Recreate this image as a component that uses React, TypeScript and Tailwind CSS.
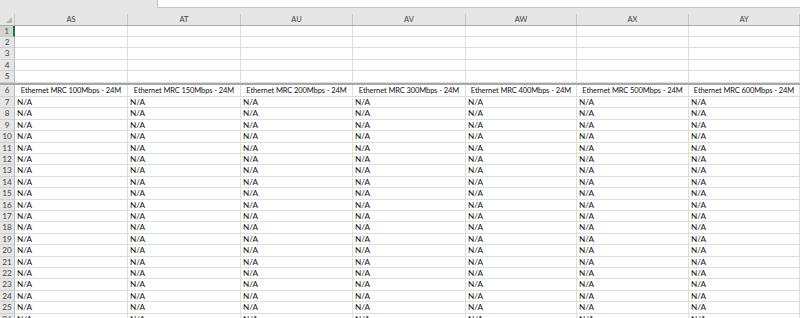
const columns = [
  { id: "AS", speed: "100Mbps" },
  { id: "AT", speed: "150Mbps" },
  { id: "AU", speed: "200Mbps" },
  { id: "AV", speed: "300Mbps" },
  { id: "AW", speed: "400Mbps" },
  { id: "AX", speed: "500Mbps" },
  { id: "AY", speed: "600Mbps" },
];

// grid template shared by every row so the column lines stay aligned
const cols = "grid grid-cols-[15px_113px_113px_112px_113px_111px_112px_1fr]";

// rows alternate 11/12px so they average out like the zoomed sheet
const rowHeight = (n: number) => ((n * 2) % 5 < 2 ? "h-[12px]" : "h-[11px]");

function RowHeader({ n, active }: { n: number; active?: boolean }) {
  return (
    <div
      className={
        active
          ? "flex items-center justify-center border-r-2 border-b border-r-[#217346] border-b-[#c8c8c8] bg-[#d3d3d3] text-[#217346]"
          : "flex items-center justify-center border-r border-b border-r-[#b9b9b9] border-b-[#d0d0d0] bg-[#e6e6e6] text-[#444]"
      }
    >
      {n}
    </div>
  );
}

function EmptyRow({ n }: { n: number }) {
  return (
    <div className={`${cols} ${rowHeight(n)}`}>
      <RowHeader n={n} active={n === 1} />
      {columns.map((c) => (
        <div key={c.id} className="border-r border-b border-[#dedede] bg-white" />
      ))}
    </div>
  );
}

function TitleRow() {
  return (
    <div className={`${cols} h-[12px]`}>
      <RowHeader n={6} />
      {columns.map((c) => (
        <div
          key={c.id}
          className="flex items-center justify-center overflow-hidden whitespace-nowrap border-r border-b border-[#dedede] bg-white text-[7.5px] tracking-[-0.1px] text-[#111]"
        >
          Ethernet MRC {c.speed} - 24M
        </div>
      ))}
    </div>
  );
}

function DataRow({ n }: { n: number }) {
  return (
    <div className={`${cols} ${rowHeight(n)}`}>
      <RowHeader n={n} />
      {columns.map((c) => (
        <div
          key={c.id}
          className="flex items-center overflow-hidden whitespace-nowrap border-r border-b border-[#dedede] bg-white pl-[2px] text-[#111]"
        >
          N/A
        </div>
      ))}
    </div>
  );
}

export default function App() {
  const dataRows = Array.from({ length: 20 }, (_, i) => i + 7);
  return (
    <div
      className="h-[318px] w-[800px] overflow-hidden bg-white text-[8.2px] leading-none"
      style={{ fontFamily: "Lato, 'Liberation Sans', sans-serif" }}
    >
      {/* formula bar edge */}
      <div className="flex h-[14px] bg-[#e6e6e6]">
        <div className="ml-[157px] h-[8px] flex-1 border-l border-b border-[#c6c6c6] bg-white" />
      </div>

      {/* column letters */}
      <div className={`${cols} h-[12px] border-b border-[#ababab] bg-[#e6e6e6]`}>
        <div className="relative border-r border-[#c6c6c6]">
          <svg className="absolute right-[2px] bottom-[2px]" width="6" height="6" viewBox="0 0 6 6">
            <path d="M6 0 L6 6 L0 6 Z" fill="#b5b5b5" />
          </svg>
        </div>
        {columns.map((c) => (
          <div
            key={c.id}
            className="flex items-center justify-center border-r border-[#c6c6c6] text-[7.5px] text-[#444]"
          >
            {c.id}
          </div>
        ))}
      </div>

      {[1, 2, 3, 4, 5].map((n) => (
        <EmptyRow key={n} n={n} />
      ))}

      {/* frozen pane divider */}
      <div className="h-[2px] bg-[#a8a8a8]" />

      <TitleRow />
      {dataRows.map((n) => (
        <DataRow key={n} n={n} />
      ))}
    </div>
  );
}
